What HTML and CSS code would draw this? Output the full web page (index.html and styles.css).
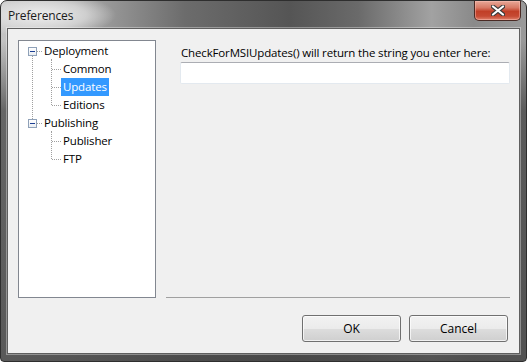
FILE: index.html
```html
<!DOCTYPE html>
<html lang="en">

<head>
    <meta charset="UTF-8" />
    <title>Preferences</title>
    <link rel="stylesheet" href="styles.css">
</head>

<body>
    <div class="window">
        <div class="titlebar">
            <span class="title">Preferences</span>
            <button class="btn-close" title="Close">
                <svg width="14" height="11" viewBox="0 0 14 11">
                    <path d="M2 1.5 L12 9.5 M12 1.5 L2 9.5" stroke="#3a3a3a" stroke-width="4.2" stroke-linecap="round" fill="none" />
                    <path d="M2 1.5 L12 9.5 M12 1.5 L2 9.5" stroke="#ffffff" stroke-width="2.2" stroke-linecap="round" fill="none" />
                </svg>
            </button>
        </div>

        <div class="client">
            <div class="main">
                <div class="tree">
                    <ul class="root">
                        <li>
                            <div class="row parent">
                                <span class="exp"></span>
                                <span class="tick"></span>
                                <span class="label">Deployment</span>
                            </div>
                            <ul class="children">
                                <li class="row child"><span class="tick"></span><span class="label">Common</span></li>
                                <li class="row child"><span class="tick"></span><span class="label selected">Updates</span></li>
                                <li class="row child"><span class="tick"></span><span class="label">Editions</span></li>
                            </ul>
                        </li>
                        <li>
                            <div class="row parent">
                                <span class="exp"></span>
                                <span class="tick"></span>
                                <span class="label">Publishing</span>
                            </div>
                            <ul class="children">
                                <li class="row child"><span class="tick"></span><span class="label">Publisher</span></li>
                                <li class="row child"><span class="tick"></span><span class="label">FTP</span></li>
                            </ul>
                        </li>
                    </ul>
                </div>

                <div class="panel">
                    <label for="msi" class="field-label">CheckForMSIUpdates() will return the string you enter here:</label>
                    <input type="text" id="msi" class="field" />
                </div>
            </div>

            <div class="buttons">
                <button class="btn">OK</button>
                <button class="btn">Cancel</button>
            </div>
        </div>
    </div>
</body>

</html>
```

FILE: styles.css
```css
body,
html {
    margin: 0;
    padding: 0;
    background-color: #ffffff;
    font-family: "Open Sans", "Liberation Sans", sans-serif;
    font-size: 11.5px;
    letter-spacing: -0.15px;
    color: #000;
}

.window {
    width: 527px;
    height: 362px;
    box-sizing: border-box;
    border: 1px solid #2e2e2e;
    border-radius: 7px 7px 4px 4px;
    padding: 0 6px 7px 6px;
    display: flex;
    flex-direction: column;
    background:
        linear-gradient(to bottom, rgba(70, 70, 70, 0) 0, rgba(70, 70, 70, 0) 40px, rgba(70, 70, 70, 0.75) 110px, rgba(70, 70, 70, 0.85) 100%),
        radial-gradient(ellipse 75px 22px at 40px 14px, rgba(238, 238, 238, 1) 0, rgba(225, 225, 225, 0.7) 60%, rgba(200, 200, 200, 0) 100%),
        linear-gradient(to right, #c4c4c4 0, #ababab 14%, #6c6c6c 35%, #555555 55%, #6a6a6a 68%, #a2a2a2 82%, #8a8a8a 90%, #9a9a9a 100%);
}

.titlebar {
    height: 27px;
    display: flex;
    align-items: flex-start;
    justify-content: space-between;
}

.title {
    margin: 7px 0 0 1px;
    color: #1a1a1a;
    line-height: 16px;
    font-size: 12px;
}

.btn-close {
    width: 47px;
    height: 20px;
    margin: 0 -1px 0 0;
    padding: 0;
    border: 1px solid #4a2a24;
    border-top: none;
    border-radius: 0 0 5px 5px;
    background: linear-gradient(to bottom, #e7a898 0, #d77a66 35%, #c13f27 55%, #c64a33 80%, #e0826c 100%);
    box-shadow: inset 0 0 0 1px rgba(255, 200, 190, 0.45);
    display: flex;
    align-items: center;
    justify-content: center;
}

.client {
    flex: 1;
    background-color: #f0f0f0;
    border: 1px solid #5f5f5f;
    box-shadow: 0 0 0 1px rgba(255, 255, 255, 0.35);
    padding: 11px 9px 0 10px;
}

.main {
    display: flex;
    height: 258px;
}

.tree {
    width: 138px;
    box-sizing: border-box;
    border: 1px solid #828790;
    background-color: #ffffff;
}

.tree ul {
    list-style: none;
    margin: 0;
    padding: 0;
    position: relative;
}

.root::before {
    content: "";
    position: absolute;
    left: 13px;
    top: 15px;
    height: 63px;
    border-left: 1px dotted #a0a0a0;
}

.children::before {
    content: "";
    position: absolute;
    left: 32px;
    top: 0;
    bottom: 8px;
    border-left: 1px dotted #a0a0a0;
}

.row {
    display: flex;
    align-items: flex-start;
    height: 18px;
}

.exp {
    width: 9px;
    height: 9px;
    box-sizing: border-box;
    margin: 6px 0 0 9px;
    border: 1px solid #8fa1b8;
    background: linear-gradient(to bottom, #ffffff 0, #e9edf2 100%);
    display: flex;
    align-items: center;
    justify-content: center;
}

.exp::after {
    content: "";
    width: 5px;
    height: 1px;
    background-color: #1c3f94;
}

.tick {
    width: 5px;
    margin-top: 10px;
    border-top: 1px dotted #a0a0a0;
}

.child {
    padding-left: 33px;
}

.child .tick {
    width: 9px;
}

.label {
    padding: 0 2px;
    margin-top: 1px;
    line-height: 18px;
    height: 18px;
    white-space: nowrap;
}

.selected {
    background-color: #3399ff;
    color: #ffffff;
}

.panel {
    flex: 1;
    margin-left: 10px;
    border-bottom: 1px solid #a0a0a0;
    padding-left: 14px;
    display: flex;
    flex-direction: column;
}

.field-label {
    margin-top: 5px;
    line-height: 15px;
    padding-left: 1px;
    white-space: nowrap;
}

.field {
    margin: 2px 0 0 0;
    height: 22px;
    box-sizing: border-box;
    border: 1px solid #e3e9ef;
    border-top-color: #abadb3;
    border-radius: 2px;
    background-color: #ffffff;
    font: inherit;
}

.buttons {
    display: flex;
    justify-content: flex-end;
    gap: 8px;
    margin: 17px 2px 0 0;
}

.btn {
    width: 99px;
    height: 27px;
    box-sizing: border-box;
    border: 1px solid #707070;
    border-radius: 3px;
    background: linear-gradient(to bottom, #f2f2f2 0, #ebebeb 50%, #dddddd 51%, #cfcfcf 100%);
    box-shadow: inset 0 0 0 1px rgba(255, 255, 255, 0.7);
    font: inherit;
    font-size: 12px;
    color: #000;
    padding: 0;
}
```
